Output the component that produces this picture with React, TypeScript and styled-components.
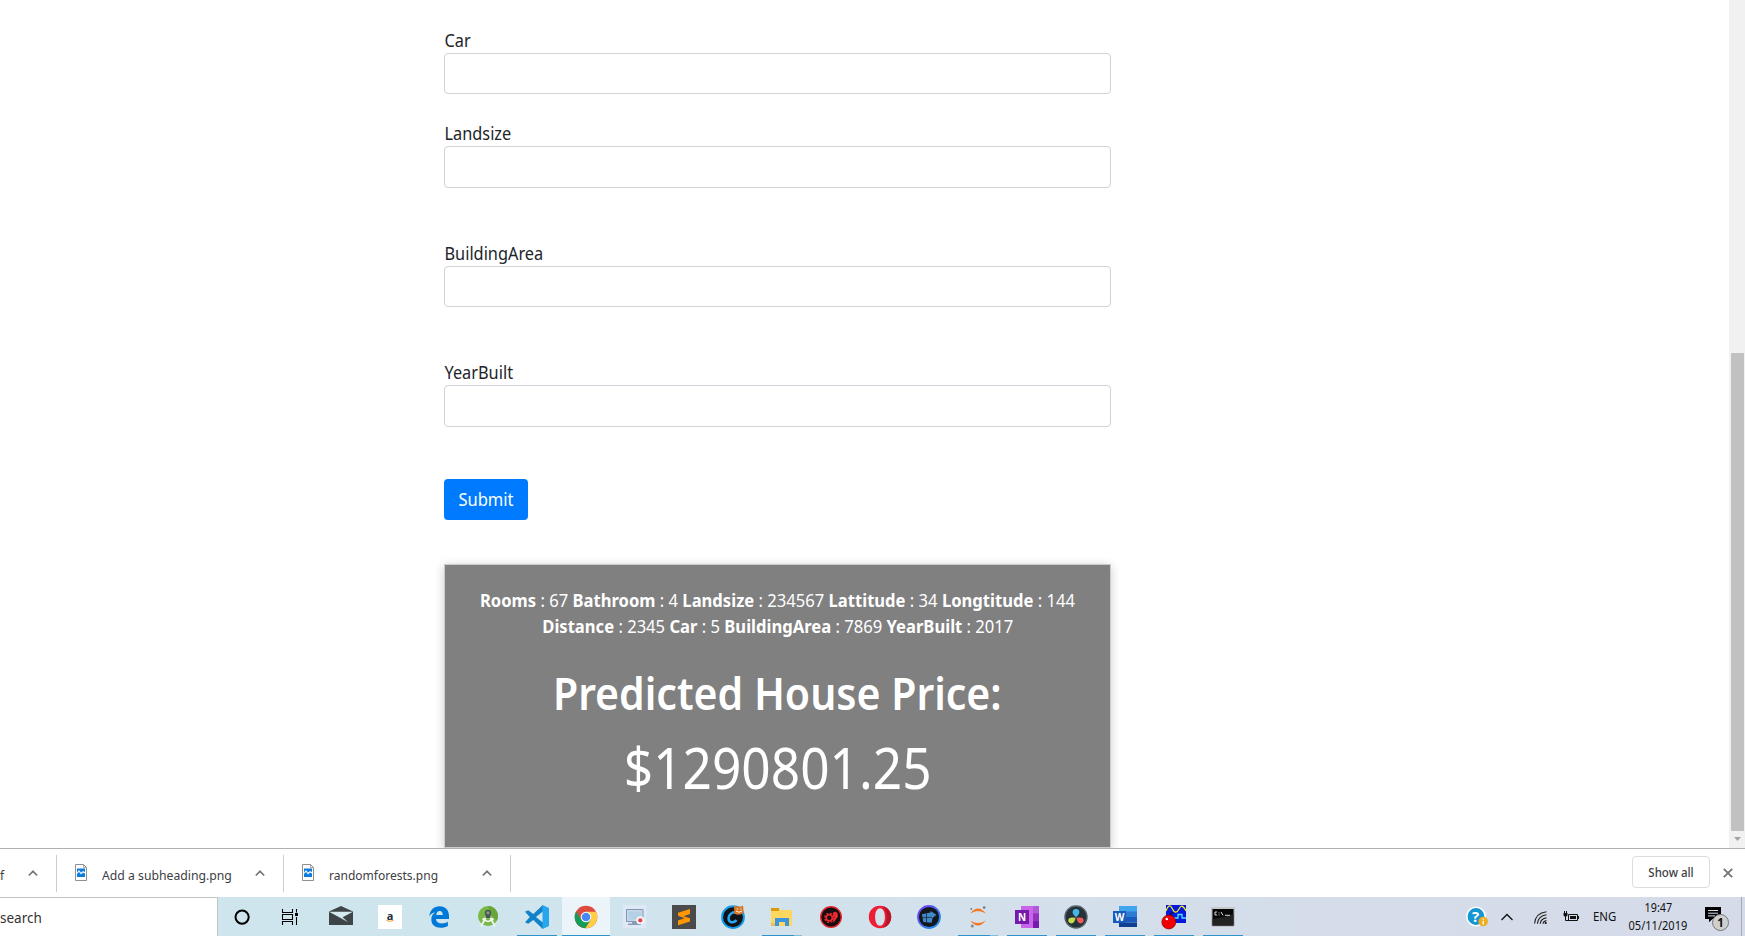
import React from "react";
import styled, { createGlobalStyle, css } from "styled-components";

const GlobalStyle = createGlobalStyle`
  * { box-sizing: border-box; }
  body { margin: 0; background: #fff; overflow: hidden; }
  body, input, button { font-family: "Noto Sans", "Open Sans", sans-serif; }
`;

/* ---------- page ---------- */
const Screen = styled.div`
  width: 1745px;
  height: 936px;
  display: flex;
  flex-direction: column;
  overflow: hidden;
  color: #212529;
`;
const Viewport = styled.div`
  height: 848px;
  display: flex;
  overflow: hidden;
`;
const Page = styled.main`
  flex: 1;
  padding: 26.6px 0 0 444px;
  font-size: 17.6px;
  line-height: 26.4px;
  overflow: hidden;
`;
const Form = styled.form`
  width: 667px;
  display: flex;
  flex-direction: column;
  align-items: stretch;
`;
const Field = styled.label<{ $gap: number }>`
  display: flex;
  flex-direction: column;
  margin-bottom: ${(p) => p.$gap}px;
`;
const Narrow = styled.span<{ $scale?: number; $origin?: string }>`
  display: block;
  white-space: nowrap;
  transform: scaleX(${(p) => p.$scale ?? 0.913});
  transform-origin: ${(p) => p.$origin ?? "left"} center;
`;
const LabelText = styled(Narrow)`
  height: 26px;
  padding-left: 0.5px;
`;
const TextInput = styled.input`
  width: 100%;
  height: 41.8px;
  border: 1px solid #ced4da;
  border-radius: 4px;
  background: #fff;
  outline: none;
`;
const SubmitButton = styled.button`
  width: 84px;
  height: 41px;
  padding: 0;
  border: 0;
  border-radius: 4px;
  background: #007bff;
  color: #fff;
  font-size: 17.6px;
  line-height: 26.4px;
`;
const ResultCard = styled.section`
  width: 667px;
  height: 284px;
  margin-top: 44px;
  padding-top: 22px;
  background: #808080;
  border: 1px solid #ccc;
  box-shadow: 0 2px 10px rgba(0, 0, 0, 0.2);
  color: #fff;
  text-align: center;
  display: flex;
  flex-direction: column;
  align-items: center;
`;
const Heading = styled.h1`
  margin: 26px 0 0;
  font-size: 45px;
  font-weight: 600;
  line-height: 54px;
`;
const Price = styled.div`
  margin-top: 14px;
  font-size: 56px;
  line-height: 67px;
`;

/* ---------- scrollbar ---------- */
const Scrollbar = styled.div`
  width: 16px;
  background: #f1f1f1;
  display: flex;
  flex-direction: column;
  align-items: center;
  padding-top: 353px;
`;
const Thumb = styled.div`
  width: 13px;
  height: 478px;
  background: #c1c1c1;
`;
const ScrollArrow = styled.svg`
  margin-top: 6px;
  width: 7px;
  height: 4px;
`;

/* ---------- downloads bar ---------- */
const Downloads = styled.div`
  height: 49px;
  border-top: 1px solid #b0b0b0;
  background: #fff;
  display: flex;
  align-items: center;
  font-size: 13px;
  color: #3c4043;
`;
const DownloadItem = styled.div<{ $width: number }>`
  width: ${(p) => p.$width}px;
  height: 37px;
  border-right: 1px solid #ccc;
  display: flex;
  align-items: center;
  padding-right: 17px;
`;
const FileIcon = styled.svg`
  width: 12px;
  height: 17px;
  margin: 0 15px 1px 18px;
`;
const FileName = styled(Narrow)`
  padding-top: 3px;
`;
const Chevron = styled.svg`
  width: 12px;
  height: 8px;
  margin-left: auto;
  flex: none;
`;
const ShowAll = styled.button`
  width: 78px;
  height: 32px;
  margin-left: auto;
  margin-bottom: 2px;
  padding: 0;
  border: 1px solid #dadce0;
  border-radius: 4px;
  background: #fff;
  color: #3c4043;
  font-size: 12.5px;
  font-weight: 500;
`;
const CloseIcon = styled.svg`
  width: 10px;
  height: 10px;
  margin: 0 12px 0 13px;
`;

/* ---------- taskbar ---------- */
const Taskbar = styled.div`
  height: 39px;
  display: flex;
  background: linear-gradient(90deg, #cee5ed 0, #cfe5ed 28%, #d3e1ec 55%, #d5dcea 78%, #d5dbe8 100%);
`;
const SearchBox = styled.div`
  width: 218px;
  flex: none;
  border-top: 1px solid #c4c4c4;
  border-right: 1px solid #c4c4c4;
  background: #fff;
  font-size: 15px;
  line-height: 39px;
  color: #333;
`;
const Apps = styled.div`
  display: flex;
  gap: 1px;
  margin-left: 1px;
`;
type Run = "none" | "open" | "group" | "active";
const AppSlot = styled.div<{ $run: Run }>`
  width: 48px;
  height: 39px;
  display: flex;
  align-items: center;
  justify-content: center;
  ${(p) =>
    p.$run === "open" &&
    css`background: linear-gradient(#2e93c9, #2e93c9) 4px 38px / 40px 1px no-repeat;`}
  ${(p) =>
    p.$run === "group" &&
    css`
      background: linear-gradient(90deg, #2e93c9 32px, #86bbdb 32px) 4px 38px / 40px 1px no-repeat;
    `}
  ${(p) =>
    p.$run === "active" &&
    css`background: linear-gradient(#2e93c9, #2e93c9) 0 38px / 48px 1px no-repeat, #ebf4f8;`}
  svg { width: 24px; height: 24px; overflow: visible; }
`;
const Tray = styled.div`
  margin-left: auto;
  display: flex;
  align-items: center;
  color: #111;
  font-size: 12px;
`;
const TrayIcon = styled.svg<{ $w: number; $h: number; $right: number; $drop?: number }>`
  width: ${(p) => p.$w}px;
  height: ${(p) => p.$h}px;
  margin-right: ${(p) => p.$right}px;
  margin-top: ${(p) => p.$drop ?? 0}px;
  flex: none;
  overflow: visible;
`;
const Language = styled.div`
  width: 23px;
  margin-right: 12px;
`;
const Clock = styled.div`
  width: 60px;
  display: flex;
  flex-direction: column;
  align-items: center;
  line-height: 18px;
  margin-right: 17px;
`;
const DesktopEdge = styled.div`
  height: 39px;
  width: 4px;
  border-left: 1px solid #a5acb8;
`;
const IconText = styled.text<{ $size: number }>`
  font-family: "Open Sans", sans-serif;
  font-weight: 700;
  font-size: ${(p) => p.$size}px;
  text-anchor: middle;
`;

const S = ({ children }: { children: React.ReactNode }) => (
  <svg viewBox="0 0 24 24">{children}</svg>
);

const apps: { name: string; run: Run; icon: React.ReactNode }[] = [
  { name: "cortana", run: "none", icon: <S><circle cx="11.1" cy="12.1" r="6.6" fill="none" stroke="#000" strokeWidth="2" /></S> },
  {
    name: "task-view", run: "none",
    icon: <S><g fill="none" stroke="#000" strokeWidth="1.1"><path d="M2.5 4V7.5H12.5V4M2.5 20V16.5H12.5V20M2.5 9.5H12.5V14.5H2.5ZM16.5 4V7.5M16.5 12V20" /></g><path fill="#000" d="M15 8h3v3h-3z" /></S>,
  },
  {
    name: "mail", run: "none",
    icon: <S><path d="M0 6.6 12 1l12 5.6V20H0z" fill="#3e4447" /><path d="M0 6.8H24L13.6 12.3 19.2 17.2 10.2 12.3z" fill="#d3e8ef" /></S>,
  },
  {
    name: "amazon", run: "none",
    icon: <S><path fill="#fff" d="M0 0h24v24H0z" /><IconText x="12" y="14.6" $size={11} fill="#222b3a">a</IconText><path d="M8.5 15.2q3.5 2 7 0" fill="none" stroke="#f6a445" strokeWidth="1.1" /></S>,
  },
  {
    name: "edge", run: "none",
    icon: <S><path fill="#0078d7" d="M2.3 11.2C3.1 4.7 7 1.2 12.5 1.2 18.8 1.2 22 5.5 22 10.8V14H9c.2 3 2.8 4.4 5.8 4.4 2.3 0 4.3-.6 6.1-1.7v4.2c-2 1.1-4.5 1.8-7.1 1.8-5.7 0-9.5-3-9.5-8.2 0-3.4 1.6-5.8 4.2-7.2-2.7.3-4.8 2-6.2 3.9zM9.2 10h6.6c0-2.5-1.1-4.1-3.2-4.1-1.9 0-3.1 1.6-3.4 4.1z" /></S>,
  },
  {
    name: "android-studio", run: "none",
    icon: <S><circle cx="12" cy="11" r="10" fill="#78b844" /><path d="M12 1a10 10 0 0 1 8.8 14.8L15 10z" fill="#69a53b" /><path d="M11 10 5 21.5M13 10l6 11.5" stroke="#e9f2ed" strokeWidth="2" /><path d="M6.5 13.5q5.5 6 11 0" fill="none" stroke="#fff" strokeWidth="1.6" /><circle cx="12" cy="8" r="2.4" fill="#8b9a8c" stroke="#4b574e" strokeWidth="1.5" /><path d="M9.5 9.5h5V13h-5z" fill="#4b574e" /></S>,
  },
  {
    name: "vscode", run: "open",
    icon: <S><path d="M17.5 0 24 3v18l-6.5 3z" fill="#25a6ed" /><path d="M17.8 0 8.3 9.1 3.2 5.2 0 6.8 4.8 12 0 17.2l3.2 1.6 5.1-3.9 9.5 9.1V17.6L10.9 12l6.9-5.6z" fill="#1283ca" /></S>,
  },
  {
    name: "chrome", run: "active",
    icon: <S><circle cx="12" cy="12" r="11.3" fill="#dd4b3e" /><path d="M2.2 6.3A11.3 11.3 0 0 0 11.4 23.3L16.6 15 7.3 14.8z" fill="#179b58" /><path d="M22 6.8H12l4.9 7.6-5.5 8.9A11.3 11.3 0 0 0 22 6.8z" fill="#ffce44" /><circle cx="12" cy="12" r="5.3" fill="#fff" /><circle cx="12" cy="12" r="4.3" fill="#4688f4" /></S>,
  },
  {
    name: "recorder", run: "none",
    icon: <S><path d="M0 0h23.5v23H0z" fill="#dfe9f6" /><path d="M3.5 4.5H20v12H3.5z" fill="#c7d9e8" stroke="#8097b2" /><path d="M5.5 6.5H18v8H5.5z" fill="#b4d0e4" /><path d="M9 16.5h5v2H9zM5 18.5h13v1.5H5z" fill="#899bb1" /><circle cx="17.3" cy="15.3" r="4" fill="#f4f6fa" /><circle cx="17.3" cy="15.3" r="2.1" fill="#ee3f42" /></S>,
  },
  {
    name: "sublime", run: "none",
    icon: <S><path d="M0 0h24v24H0z" fill="#4b4b4b" /><path d="M18 4v5l-6.5 2.2L18 13.3v3.2L6 20.2v-4.7l6.5-2.3L6 10.8V7.7z" fill="#ff9800" /></S>,
  },
  {
    name: "cleaner", run: "none",
    icon: <S><circle cx="12" cy="12.2" r="10.9" fill="#101419" stroke="#139cec" strokeWidth="1.9" /><path d="M15.8 8.3c-3-2.4-8.2.4-8.2 5.2 0 4.3 4.8 5 8 1.6" fill="none" stroke="#27a7f0" strokeWidth="2.5" /><path d="M13 .8l2.4.7h4.4l2.4-.7.4 7.2q-4.6 3.1-9.4.4z" fill="#d87526" /><path d="M15 6q3 2.5 6 0M15.8 4h1.2M19.2 4h1.2" stroke="#fff1df" fill="none" /></S>,
  },
  {
    name: "explorer", run: "group",
    icon: <S><path d="M1 3h8l1.5 2H22v16H1z" fill="#ffd760" /><path d="M1 3h8v3H1z" fill="#d99b09" /><path d="M5 13h14v8h-4v-4H9v4H5z" fill="#3a96dd" /><path d="M1 18h4v3H1z" fill="#f3be4a" /></S>,
  },
  {
    name: "game-gear", run: "none",
    icon: <S><circle cx="12" cy="12" r="10.3" fill="#160d0e" stroke="#e5252d" strokeWidth="1.4" /><circle cx="10.3" cy="12.8" r="3" fill="none" stroke="#ee2932" strokeWidth="1.6" /><circle cx="10.3" cy="12.8" r="4.4" fill="none" stroke="#ee2932" strokeWidth="1.6" strokeDasharray="2 1.45" /><path d="M13.5 8l2.5-1.5L18.5 8 19 11.5 16 15.5 14.8 18l-.8-3 1.5-3z" fill="#ee2932" /></S>,
  },
  {
    name: "opera", run: "none",
    icon: <S><path fillRule="evenodd" fill="#ee1e37" d="M12 .8C5.6.8.8 5.6.8 12S5.6 23.2 12 23.2 23.2 18.4 23.2 12 18.4.8 12 .8zM12 3.2c3 0 4.9 3.8 4.9 8.8s-1.9 8.8-4.9 8.8S7.1 17 7.1 12 9 3.2 12 3.2z" /><path d="M15 1.2c11 3 11 18.6 0 21.6 5-6 5-15.6 0-21.6z" fill="#b71528" /></S>,
  },
  {
    name: "bundle", run: "none",
    icon: <S><defs><linearGradient id="ring" x1="0" y1="0" x2="1" y2="1"><stop stopColor="#7938fb" /><stop offset="1" stopColor="#159ee8" /></linearGradient></defs><circle cx="12" cy="12" r="11" fill="#14171e" stroke="url(#ring)" strokeWidth="1.8" /><path d="M5 9.2 13.5 7.6V6l6 3.7-4 3.3-.8 4.8-8.4-.8z" fill="#4289c9" /><path d="M5.5 12.7 15 12.3M9.5 8.4v9" stroke="#15202d" strokeWidth=".7" /></S>,
  },
  {
    name: "jupyter", run: "group",
    icon: <S><path d="M4.2 8.6Q12-1.4 19.8 8.6 12 3.4 4.2 8.6zM4.2 15.4Q12 25.4 19.8 15.4 12 20.6 4.2 15.4z" fill="#f37726" /><circle cx="18.2" cy="2.5" r="1.3" fill="#737479" /><circle cx="6.3" cy="21" r="1.6" fill="#8a8b90" /><circle cx="5.2" cy="4" r=".9" fill="#737479" /></S>,
  },
  {
    name: "onenote", run: "open",
    icon: <S><path d="M6 1h18v22H6z" fill="#ca64ea" /><path d="M18 1h6v7.3h-6z" fill="#b05bd8" /><path d="M18 8.3h6v7.4h-6z" fill="#9332bf" /><path d="M18 15.7h6V23h-6z" fill="#7719aa" /><path d="M0 5h14v14H0z" fill="#7719aa" /><IconText x="7" y="15.6" $size={10} fill="#fff">N</IconText></S>,
  },
  {
    name: "resolve", run: "open",
    icon: <S><circle cx="12" cy="12" r="11" fill="#263138" stroke="#54606a" strokeWidth="1.4" /><path d="M12 12.3Q7.8 8.5 8.8 5.9c1-2.5 5.4-2.5 6.4 0q1 2.6-3.2 6.4z" fill="#45b7e8" /><path d="M11.6 12.8Q10.5 18.5 7.5 18.5c-3 0-4.4-3.6-2.2-5.2q2-1.5 6.3-.5z" fill="#c5dc4e" /><path d="M12.4 12.8Q13.5 18.5 16.5 18.5c3 0 4.4-3.6 2.2-5.2q-2-1.5-6.3-.5z" fill="#ef5b58" /></S>,
  },
  {
    name: "word", run: "open",
    icon: <S><path d="M6 1h18v6H6z" fill="#41a5ee" /><path d="M6 6.5h18V12H6z" fill="#2b7cd3" /><path d="M6 12h18v5.5H6z" fill="#185abd" /><path d="M6 17.5h18V22H6z" fill="#103f91" /><path d="M0 6h13v12H0z" fill="#185abd" /><IconText x="6.5" y="15.5" $size={10} fill="#fff">W</IconText></S>,
  },
  {
    name: "signal", run: "open",
    icon: <S><path d="M4 0h20v18H4z" fill="#0717dc" /><path d="M4 6C6.5-.5 8.5-.5 10.500 4S15 8 17 4s4-4 7 2" fill="none" stroke="#e9ed1f" strokeWidth="1.3" /><path d="M12 13h4V9.500h4V13h4" fill="none" stroke="#46e9f2" strokeWidth="1.3" /><path d="M8.500 11V8h3" stroke="#111" fill="none" /><circle cx="6.800" cy="17" r="7" fill="#f00000" stroke="#790000" strokeWidth=".6" /><circle cx="4.800" cy="14" r="1.300" fill="#fff" /></S>,
  },
  {
    name: "terminal", run: "open",
    icon: <S><path d="M1 2.500h22V21H1z" fill="#080808" stroke="#a8a8a8" /><path d="M1 2h22v2H1z" fill="#c6c8ca" /><path d="M1.500 14Q12 13 22.500 9v11.500h-21z" fill="#222" /><path d="M6 7H4v3h2M8 7.500v.8M8 9.500v.8M10 7l2 3.300M14 10.300h5" stroke="#eee" fill="none" strokeWidth=".9" /></S>,
  },
];

const fields = [
  { label: "Car", gap: 26 },
  { label: "Landsize", gap: 51.4 },
  { label: "BuildingArea", gap: 52 },
  { label: "YearBuilt", gap: 51.8 },
];

const UpChevron = () => (
  <Chevron viewBox="0 0 12 8"><path d="M1.8 6.5 6 2.3l4.2 4.2" fill="none" stroke="#777" strokeWidth="1.7" /></Chevron>
);
const ImageFile = () => (
  <FileIcon viewBox="0 0 12 17">
    <path d="M.5.5H8.5L11.5 3.5V16.5H.5z" fill="#fff" stroke="#8f8f8f" />
    <path d="M8.5.5v3h3" fill="none" stroke="#8f8f8f" strokeWidth=".8" />
    <path d="M2 4.500h8v8.500H2z" fill="#0c7bdb" />
    <path d="M2 10V8.500L4 6l2 2.500L8 7l2 1v1.500L8 8.700 6 10.500 4 8z" fill="#e6f3fc" />
  </FileIcon>
);

export default function App() {
  return (
    <Screen>
      <GlobalStyle />
      <Viewport>
        <Page>
          <Form>
            {fields.map((f) => (
              <Field key={f.label} $gap={f.gap}>
                <LabelText $scale={0.928}>{f.label}</LabelText>
                <TextInput />
              </Field>
            ))}
            <SubmitButton type="button"><Narrow $origin="center" $scale={0.94}>Submit</Narrow></SubmitButton>
          </Form>
          <ResultCard>
            <Narrow $origin="center" $scale={0.943}>
              <b>Rooms</b> : 67 <b>Bathroom</b> : 4 <b>Landsize</b> : 234567 <b>Lattitude</b> : 34 <b>Longtitude</b> : 144
            </Narrow>
            <Narrow $origin="center" $scale={0.943}>
              <b>Distance</b> : 2345 <b>Car</b> : 5 <b>BuildingArea</b> : 7869 <b>YearBuilt</b> : 2017
            </Narrow>
            <Heading><Narrow $origin="center" $scale={0.911}>Predicted House Price:</Narrow></Heading>
            <Price><Narrow $origin="center" $scale={0.918}>$1290801.25</Narrow></Price>
          </ResultCard>
        </Page>
        <Scrollbar>
          <Thumb />
          <ScrollArrow viewBox="0 0 7 4"><path d="M0 0h7L3.5 4z" fill="#a3a3a3" /></ScrollArrow>
        </Scrollbar>
      </Viewport>
      <Downloads>
        <DownloadItem $width={57}><FileName>f</FileName><UpChevron /></DownloadItem>
        <DownloadItem $width={227}><ImageFile /><FileName $scale={0.94}>Add a subheading.png</FileName><UpChevron /></DownloadItem>
        <DownloadItem $width={227}><ImageFile /><FileName $scale={0.925}>randomforests.png</FileName><UpChevron /></DownloadItem>
        <ShowAll><Narrow $origin="center" $scale={0.92}>Show all</Narrow></ShowAll>
        <CloseIcon viewBox="0 0 10 10"><path d="M.8.8l8.4 8.4M9.2.8.8 9.2" stroke="#777" strokeWidth="1.9" /></CloseIcon>
      </Downloads>
      <Taskbar>
        <SearchBox><Narrow $scale={0.9}>search</Narrow></SearchBox>
        <Apps>
          {apps.map((a) => (
            <AppSlot key={a.name} $run={a.run}>{a.icon}</AppSlot>
          ))}
        </Apps>
        <Tray>
          <TrayIcon viewBox="0 0 22 22" $w={22} $h={22} $right={13}>
            <circle cx="10" cy="10.5" r="9.2" fill="#1695d3" stroke="#fff" strokeWidth="1.6" />
            <IconText x="9.5" y="16" $size={15} fill="#fff">?</IconText>
            <circle cx="17.2" cy="15.5" r="4.8" fill="#efae20" />
            <path d="M17.2 12.5v1.3M17.2 14.8v3.6" stroke="#fff" strokeWidth="1.3" />
          </TrayIcon>
          <TrayIcon viewBox="0 0 12 8" $w={12} $h={8} $right={21}>
            <path d="M.5 7 6 1.5 11.5 7" fill="none" stroke="#111" strokeWidth="1.3" />
          </TrayIcon>
          <TrayIcon viewBox="0 0 13 13" $w={13} $h={13} $right={16} $drop={2}>
            <g fill="none" stroke="#222" strokeWidth="1.1">
              <path d="M.6 12.5Q1.5 2 12.5.8M3.4 12.7Q4 5 12.5 3.8M6.2 12.7Q6.8 7.6 12.5 6.9M9 12.7Q9.3 10 12.5 9.6" />
            </g>
            <circle cx="11.7" cy="12" r="1.1" fill="#111" />
          </TrayIcon>
          <TrayIcon viewBox="0 0 16 11" $w={16} $h={11} $right={14}>
            <path d="M5.5 3.5h9v6h-9z" fill="none" stroke="#111" />
            <path d="M7 5h6v3H7zM15 5h1v3h-1zM.5 2h4v2.500l-1 1h-2l-1-1zM1 0h1v2H1zM3 0h1v2H3z" fill="#111" />
            <path d="M2.5 5v4.500H6" fill="none" stroke="#111" />
          </TrayIcon>
          <Language><Narrow $scale={0.95}>ENG</Narrow></Language>
          <Clock>
            <Narrow $origin="center" $scale={0.9}>19:47</Narrow>
            <Narrow $origin="center" $scale={0.92}>05/11/2019</Narrow>
          </Clock>
          <TrayIcon viewBox="0 0 24 24" $w={24} $h={24} $right={12} $drop={4}>
            <path d="M0 0h16v12H7.500L4 15.300V12H0z" fill="#000" />
            <path d="M3 3.500h10M3 6.200h10M3 8.900h7" stroke="#d5dbe8" />
            <circle cx="15.5" cy="15.5" r="8" fill="#cfcfcf" stroke="#777" />
            <IconText x="15.5" y="19.6" $size={11.5} fill="#111">1</IconText>
          </TrayIcon>
          <DesktopEdge />
        </Tray>
      </Taskbar>
    </Screen>
  );
}
